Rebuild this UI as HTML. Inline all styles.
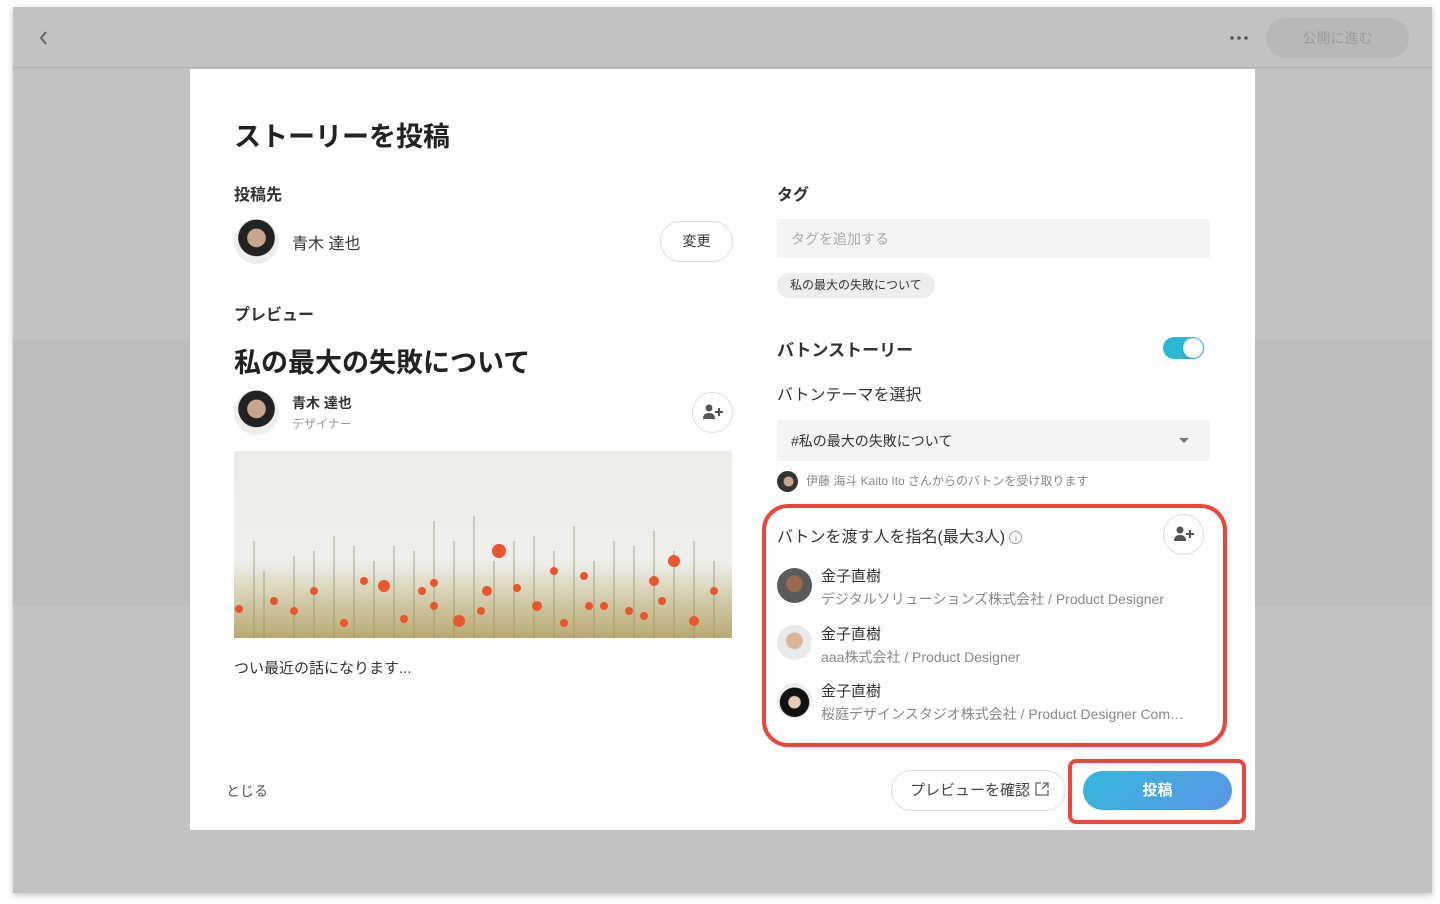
<!DOCTYPE html>
<html><head><meta charset="utf-8"><style>
*{margin:0;padding:0;box-sizing:border-box}
body{width:1440px;height:904px;background:#fff;position:relative;overflow:hidden;font-family:"Liberation Sans","Noto Sans CJK JP",sans-serif;color:#333}
.a{position:absolute;white-space:nowrap}
.win{position:absolute;left:13px;top:7px;width:1419px;height:886px;background:#c2c2c2;box-shadow:0 2px 6px rgba(0,0,0,.25)}
.modal{position:absolute;left:190px;top:69px;width:1065px;height:761px;background:#fff;border-radius:2px}
.av{position:absolute;border-radius:50%;overflow:hidden;background:#ddd}
.circ{position:absolute;border:1px solid #ddd;border-radius:50%;background:#fff}
.b{font-weight:bold}
</style></head><body>
<div class="win">
 <div class="a" style="left:0;top:60px;width:1419px;height:1px;background:#b0b0b0"></div>
 <div class="a" style="left:0;top:333px;width:1419px;height:265px;background:#bdbdbd"></div>
 <svg class="a" style="left:25px;top:23px" width="12" height="16"><path d="M8 2 L3 8 L8 14" stroke="#666" stroke-width="2" fill="none"/></svg>
 <svg class="a" style="left:1217px;top:29px" width="20" height="4"><circle cx="2" cy="2" r="1.8" fill="#555"/><circle cx="9" cy="2" r="1.8" fill="#555"/><circle cx="16" cy="2" r="1.8" fill="#555"/></svg>
 <div class="a" style="left:1253px;top:11px;width:143px;height:40px;border-radius:20px;background:#b8b8b8;color:#9a9a9a;font-size:14px;text-align:center;line-height:40px">公開に進む</div>
</div>
<div class="modal"></div>
<div class="a b" style="left:234px;top:115px;font-size:27px;color:#222">ストーリーを投稿</div>
<div class="a b" style="left:234px;top:181px;font-size:16px">投稿先</div>
<div class="av" style="left:234px;top:219px;width:45px;height:45px;background:radial-gradient(circle at 50% 42%,#c9a58e 0 26%,#222 28% 52%,#eee 54%)"></div>
<div class="a" style="left:292px;top:230px;font-size:16px">青木 達也</div>
<div class="a" style="left:660px;top:221px;width:73px;height:41px;border:1px solid #ddd;border-radius:21px;text-align:center;line-height:39px;font-size:14px">変更</div>
<div class="a b" style="left:234px;top:301px;font-size:16px">プレビュー</div>
<div class="a b" style="left:234px;top:341px;font-size:27px;color:#222">私の最大の失敗について</div>
<div class="av" style="left:234px;top:390px;width:45px;height:45px;background:radial-gradient(circle at 50% 42%,#c9a58e 0 26%,#222 28% 52%,#eee 54%)"></div>
<div class="a b" style="left:292px;top:393px;font-size:14px">青木 達也</div>
<div class="a" style="left:292px;top:415px;font-size:12px;color:#999">デザイナー</div>
<div class="circ" style="left:692px;top:392px;width:41px;height:41px"></div>
<svg class="a" style="left:702px;top:404px" width="22" height="16"><circle cx="7" cy="4" r="3.5" fill="#555"/><path d="M1 15 Q1 9 7 9 Q13 9 13 15Z" fill="#555"/><path d="M17 4v8M13 8h8" stroke="#555" stroke-width="2"/></svg>
<svg class="a" style="left:234px;top:451px" width="498" height="187">
 <defs><linearGradient id="g" x1="0" y1="0" x2="0" y2="1"><stop offset="0" stop-color="#ecece8"/><stop offset=".6" stop-color="#eeeeea"/><stop offset=".82" stop-color="#cfc7a2"/><stop offset="1" stop-color="#b9a872"/></linearGradient></defs>
 <rect width="498" height="187" fill="url(#g)"/>
 <g stroke="#8a9a6a" stroke-width="1" fill="none" opacity=".8">
 <path d="M20 187V90M60 187V105M100 187V85M140 187V110M180 187V100M200 187V70M240 187V65M280 187V90M320 187V100M360 187V110M400 187V95M440 187V100M480 187V110M30 187V120M120 187V95M260 187V110M340 187V75M420 187V80M460 187V90M80 187V100M160 187V95M220 187V90M300 187V85M380 187V90"/></g>
 <g fill="#e8552f">
 <circle cx="150" cy="135" r="6"/><circle cx="188" cy="140" r="4"/><circle cx="200" cy="155" r="4"/><circle cx="253" cy="140" r="5"/><circle cx="265" cy="100" r="7"/><circle cx="283" cy="137" r="4"/><circle cx="303" cy="155" r="5"/><circle cx="320" cy="120" r="4"/><circle cx="350" cy="125" r="4"/><circle cx="355" cy="155" r="4"/><circle cx="420" cy="130" r="5"/><circle cx="428" cy="150" r="4"/><circle cx="440" cy="110" r="6"/><circle cx="460" cy="170" r="5"/><circle cx="5" cy="158" r="4"/><circle cx="60" cy="160" r="4"/><circle cx="80" cy="140" r="4"/><circle cx="130" cy="130" r="4"/><circle cx="200" cy="132" r="4"/><circle cx="225" cy="170" r="6"/><circle cx="247" cy="160" r="4"/><circle cx="370" cy="155" r="4"/><circle cx="395" cy="160" r="4"/><circle cx="110" cy="172" r="4"/><circle cx="170" cy="168" r="4"/><circle cx="480" cy="140" r="4"/><circle cx="40" cy="150" r="4"/><circle cx="330" cy="172" r="4"/><circle cx="410" cy="165" r="4"/></g>
</svg>
<div class="a" style="left:234px;top:657px;font-size:15px">つい最近の話になります...</div>
<div class="a" style="left:226px;top:781px;font-size:14px;color:#555">とじる</div>

<div class="a b" style="left:777px;top:181px;font-size:16px">タグ</div>
<div class="a" style="left:777px;top:219px;width:433px;height:39px;background:#f4f4f4;border-radius:2px;font-size:14px;color:#aaa;padding:10px 0 0 14px">タグを追加する</div>
<div class="a" style="left:777px;top:273px;height:25px;padding:0 13px;background:#eee;border-radius:13px;font-size:12px;line-height:25px">私の最大の失敗について</div>
<div class="a b" style="left:777px;top:336px;font-size:17px">バトンストーリー</div>
<div class="a" style="left:1163px;top:337px;width:41px;height:22px;border-radius:11px;background:#2bb7d6"></div>
<div class="a" style="left:1183px;top:338px;width:20px;height:20px;border-radius:50%;background:#fff;box-shadow:0 1px 2px rgba(0,0,0,.2)"></div>
<div class="a" style="left:777px;top:381px;font-size:16px">バトンテーマを選択</div>
<div class="a" style="left:777px;top:420px;width:433px;height:41px;background:#f4f4f4;border-radius:2px;font-size:14px;padding:11px 0 0 14px">#私の最大の失敗について</div>
<svg class="a" style="left:1178px;top:437px" width="12" height="8"><path d="M1 1h10L6 6z" fill="#777"/></svg>
<div class="av" style="left:777px;top:471px;width:21px;height:21px;background:radial-gradient(circle at 55% 50%,#c9a58e 0 30%,#333 34%)"></div>
<div class="a" style="left:806px;top:472px;font-size:12px;color:#888">伊藤 海斗 Kaito Ito さんからのバトンを受け取ります</div>

<div class="a" style="left:762px;top:504px;width:465px;height:243px;border:4px solid #f04339;border-radius:26px"></div>
<div class="a" style="left:777px;top:523px;font-size:16px">バトンを渡す人を指名(最大3人) <span style="display:inline-block;width:13px;height:13px;border:1px solid #999;border-radius:50%;font-size:9px;text-align:center;line-height:12px;color:#999;vertical-align:1px">i</span></div>
<div class="circ" style="left:1163px;top:514px;width:41px;height:41px"></div>
<svg class="a" style="left:1173px;top:526px" width="22" height="16"><circle cx="7" cy="4" r="3.5" fill="#555"/><path d="M1 15 Q1 9 7 9 Q13 9 13 15Z" fill="#555"/><path d="M17 4v8M13 8h8" stroke="#555" stroke-width="2"/></svg>
<div class="av" style="left:777px;top:568px;width:35px;height:35px;background:radial-gradient(circle at 50% 45%,#9a6a4e 0 30%,#5a5a5a 34%)"></div>
<div class="a" style="left:821px;top:565px;font-size:15px">金子直樹</div>
<div class="a" style="left:821px;top:589px;font-size:14px;color:#888">デジタルソリューションズ株式会社 / Product Designer</div>
<div class="av" style="left:777px;top:625px;width:35px;height:35px;background:radial-gradient(circle at 50% 45%,#d9b59a 0 30%,#eaeaea 34%)"></div>
<div class="a" style="left:821px;top:623px;font-size:15px">金子直樹</div>
<div class="a" style="left:821px;top:647px;font-size:14px;color:#888">aaa株式会社 / Product Designer</div>
<div class="av" style="left:777px;top:683px;width:35px;height:35px;background:radial-gradient(circle at 50% 55%,#e6cbb6 0 22%,#111 26% 55%,#eee 58%)"></div>
<div class="a" style="left:821px;top:680px;font-size:15px">金子直樹</div>
<div class="a" style="left:821px;top:704px;font-size:14px;color:#888">桜庭デザインスタジオ株式会社 / Product Designer Com…</div>

<div class="a" style="left:891px;top:770px;width:175px;height:41px;border:1px solid #ddd;border-radius:21px;font-size:15px;line-height:39px;padding-left:18px;color:#444">プレビューを確認 <svg width="16" height="16" style="vertical-align:-2px"><path d="M7 2H2v12h12V9M9 2h5v5M14 2L8 8" stroke="#666" stroke-width="1.3" fill="none"/></svg></div>
<div class="a" style="left:1068px;top:759px;width:178px;height:65px;border:4px solid #f04339;border-radius:8px"></div>
<div class="a b" style="left:1083px;top:771px;width:149px;height:39px;border-radius:20px;background:linear-gradient(135deg,#33b8dc,#5b95e5);color:#fff;font-size:15px;text-align:center;line-height:39px">投稿</div>
</body></html>
